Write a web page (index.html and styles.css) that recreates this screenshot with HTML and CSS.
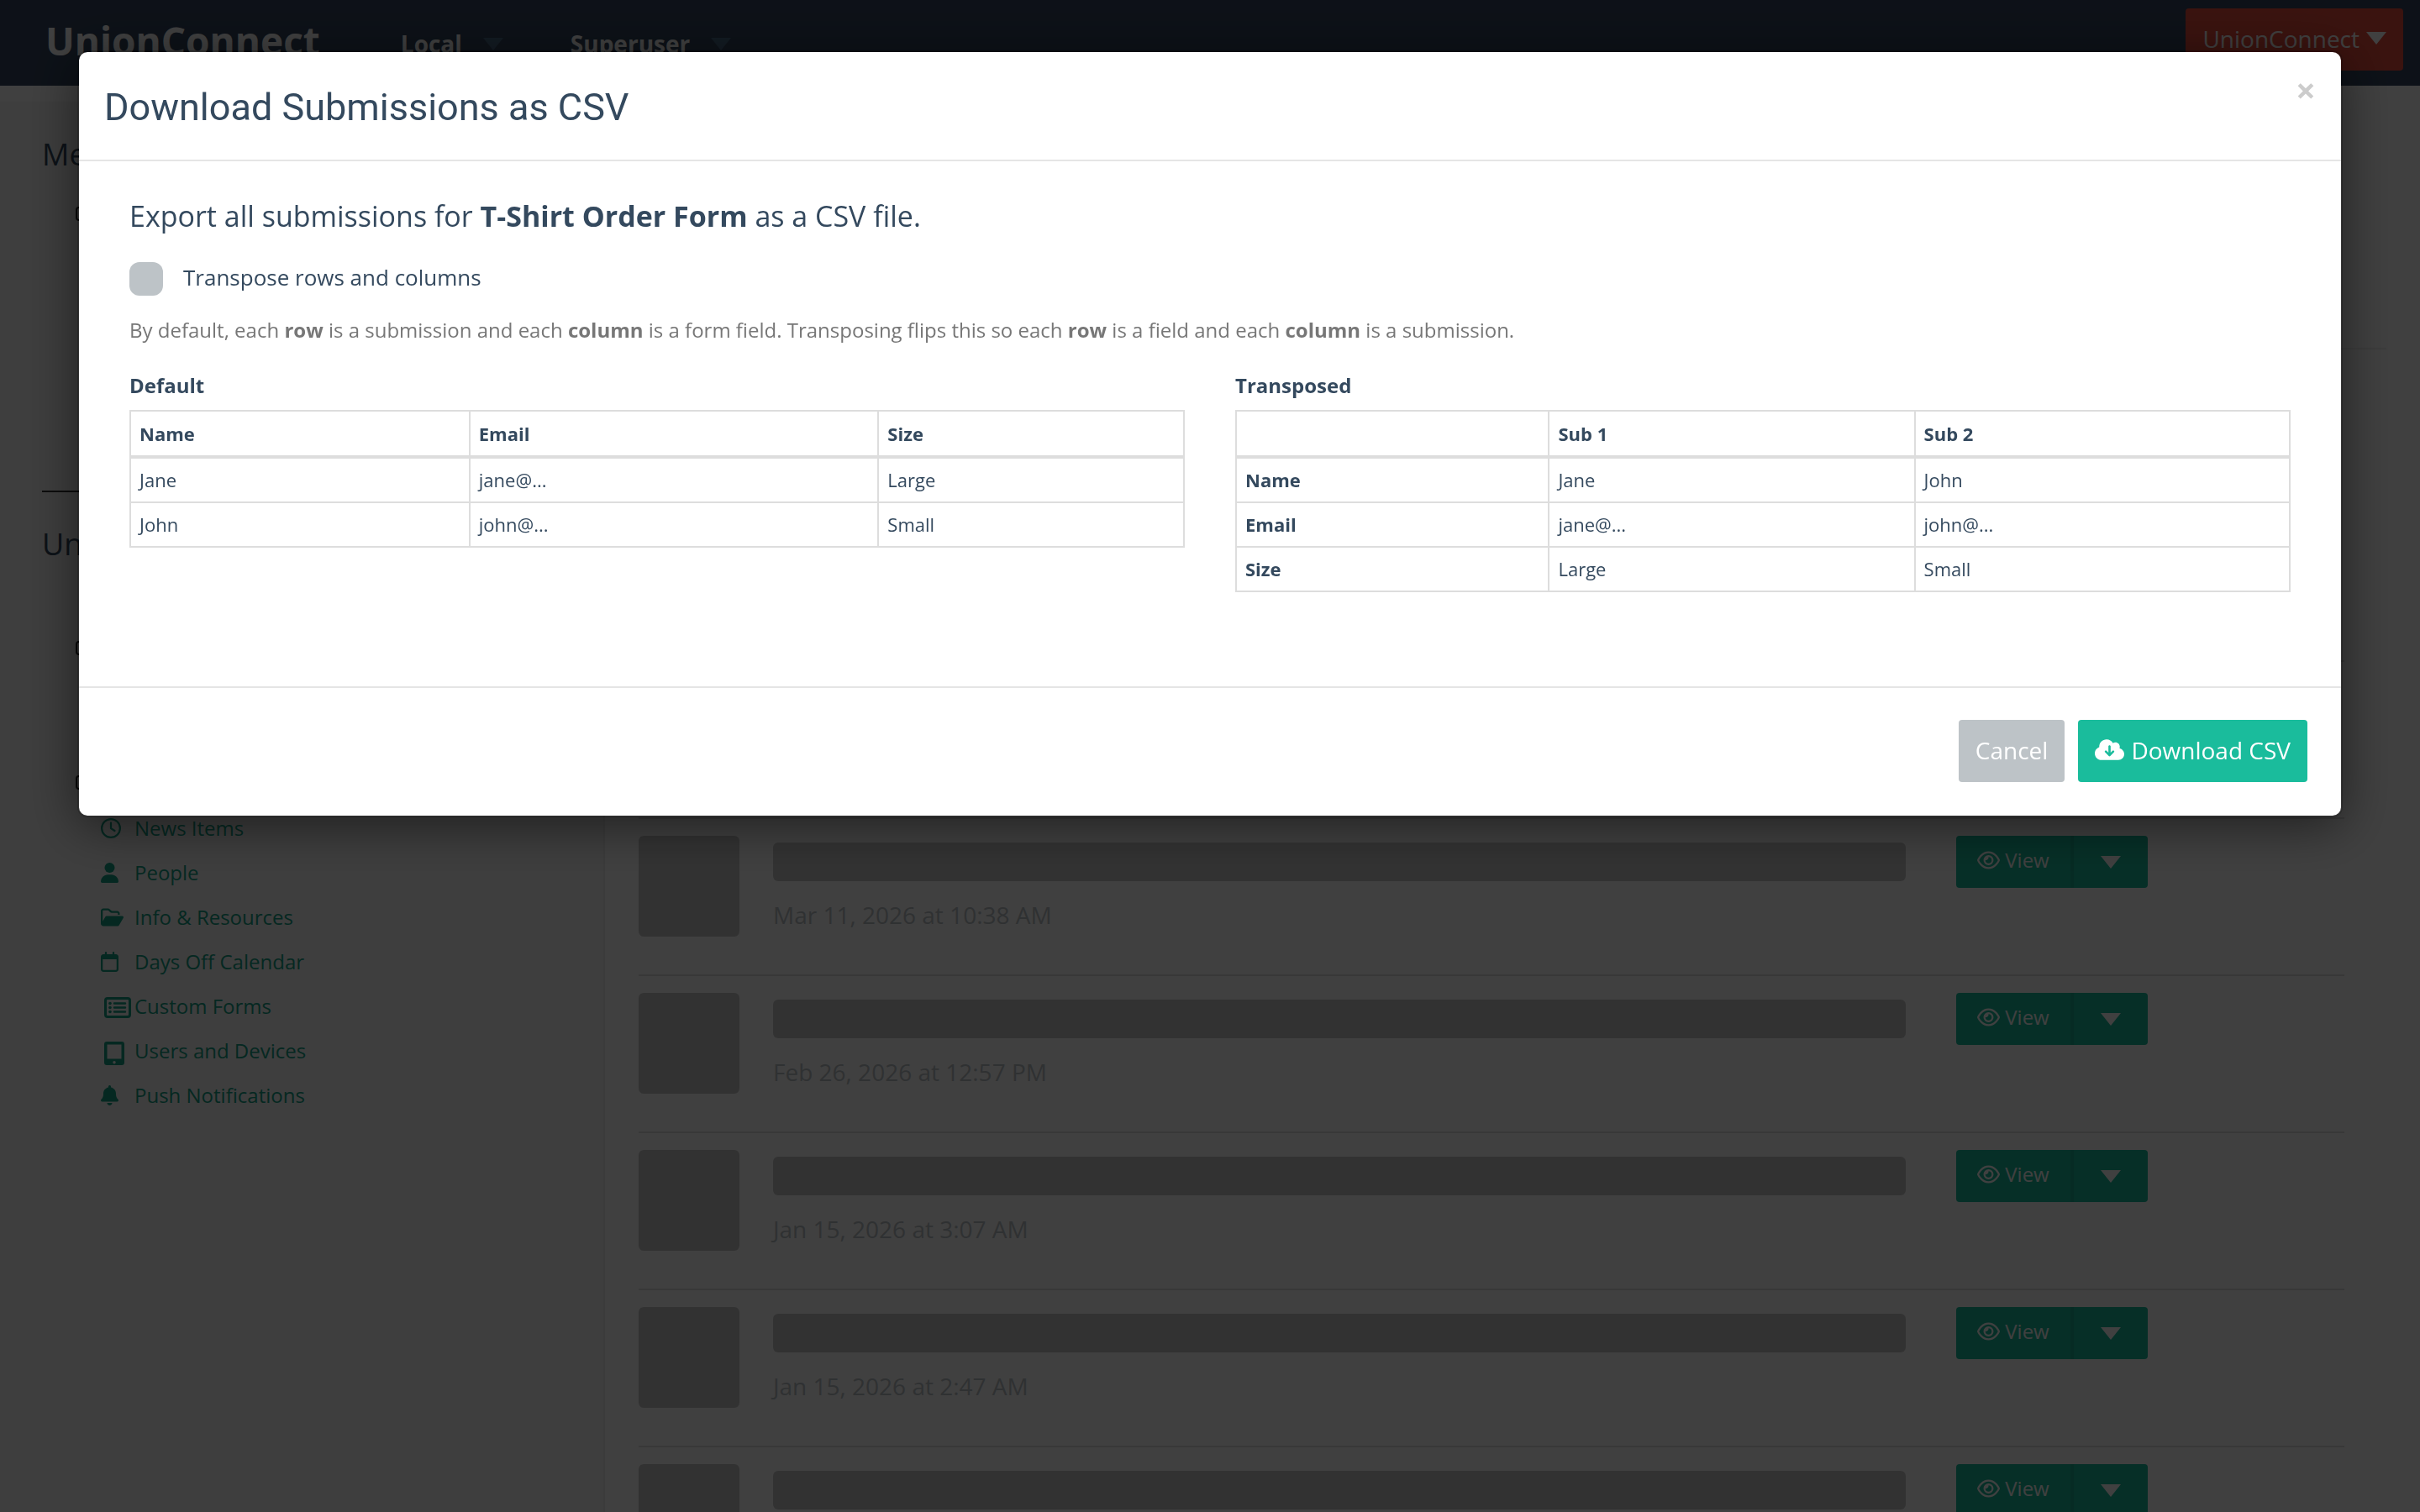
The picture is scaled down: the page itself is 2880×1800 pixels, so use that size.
FILE: index.html
```html
<!DOCTYPE html>
<html lang="en">
<head>
    <meta charset="UTF-8">
    <meta name="viewport" content="width=device-width, initial-scale=1.0">
    <title>UnionConnect</title>
    <link rel="stylesheet" href="styles.css">
</head>
<body>
<svg class="sprite" aria-hidden="true">
    <symbol id="i-clock" viewBox="0 0 512 512"><path d="M464 256A208 208 0 1 1 48 256a208 208 0 1 1 416 0zM0 256a256 256 0 1 0 512 0A256 256 0 1 0 0 256zM232 120V256c0 8 4 15.500 10.700 20l96 64c11 7.400 25.900 4.400 33.300-6.700s4.400-25.900-6.700-33.300L280 243.200V120c0-13.300-10.700-24-24-24s-24 10.700-24 24z"/></symbol>
    <symbol id="i-user" viewBox="0 0 448 512"><circle cx="224" cy="128" r="128"/><path d="M178.300 304h91.400C368.200 304 448 383.800 448 482.300c0 16.400-13.300 29.700-29.700 29.700H29.700C13.300 512 0 498.700 0 482.300C0 383.800 79.800 304 178.300 304z"/></symbol>
    <symbol id="i-folder" viewBox="0 0 576 512"><path d="M384 480h48c11.400 0 21.900-6 27.600-15.900l112-192c5.800-9.900 5.800-22.100 .1-32.100S555.500 224 544 224H144c-11.400 0-21.900 6-27.600 15.900L48 357.100V96c0-8.800 7.200-16 16-16H181.500c4.200 0 8.300 1.700 11.300 4.700l26.500 26.500c21 21 49.500 32.800 79.200 32.800H416c8.800 0 16 7.200 16 16v32h48V160c0-35.300-28.700-64-64-64H298.500c-17 0-33.300-6.700-45.300-18.700L226.700 50.700c-12-12-28.300-18.700-45.300-18.700H64C28.700 32 0 60.700 0 96V416c0 35.300 28.700 64 64 64H384z"/></symbol>
    <symbol id="i-calendar" viewBox="0 0 448 512"><path d="M152 24c0-13.300-10.700-24-24-24s-24 10.700-24 24V64H64C28.700 64 0 92.700 0 128V448c0 35.300 28.700 64 64 64H384c35.300 0 64-28.700 64-64V128c0-35.300-28.700-64-64-64H344V24c0-13.300-10.700-24-24-24s-24 10.700-24 24V64H152V24zM48 192H400V448c0 8.800-7.200 16-16 16H64c-8.800 0-16-7.200-16-16V192z"/></symbol>
    <symbol id="i-list" viewBox="0 0 32 26"><rect x="1.500" y="1.500" width="29" height="22" rx="2.500" fill="none" stroke="currentColor" stroke-width="3"/><path d="M12 7.500h13M12 12.500h13M12 17.500h13" fill="none" stroke="currentColor" stroke-width="2.400" stroke-linecap="round"/><circle cx="7" cy="7.500" r="1.800"/><circle cx="7" cy="12.500" r="1.800"/><circle cx="7" cy="17.500" r="1.800"/></symbol>
    <symbol id="i-tablet" viewBox="0 0 24 28"><path fill-rule="evenodd" d="M3 0h18a3 3 0 0 1 3 3v22a3 3 0 0 1-3 3H3a3 3 0 0 1-3-3V3a3 3 0 0 1 3-3zM3.500 3.500v17h17v-17zM12 23a1.700 1.700 0 1 0 .01 0z"/></symbol>
    <symbol id="i-bell" viewBox="0 0 448 512"><path d="M224 0c-17.700 0-32 14.300-32 32V51.200C119 66 64 130.600 64 208v18.800c0 47-17.300 92.400-48.500 127.600l-7.400 8.300c-8.400 9.400-10.400 22.900-5.300 34.400S19.400 416 32 416H416c12.600 0 24-7.400 29.200-18.900s3.100-25-5.300-34.400l-7.400-8.300C401.300 319.200 384 273.900 384 226.800V208c0-77.400-55-142-128-156.800V32c0-17.700-14.300-32-32-32zm45.300 493.300c12-12 18.700-28.300 18.700-45.300H160c0 17 6.700 33.300 18.700 45.300s28.300 18.700 45.300 18.700s33.300-6.700 45.300-18.700z"/></symbol>
    <symbol id="i-eye" viewBox="0 0 576 512"><path d="M288 80c-65.200 0-118.800 29.600-159.900 67.700C89.600 183.500 63 226 49.400 256c13.600 30 40.200 72.500 78.600 108.300C169.200 402.400 222.800 432 288 432s118.800-29.600 159.900-67.700C486.400 328.500 513 286 526.600 256c-13.600-30-40.200-72.500-78.600-108.300C406.800 109.600 353.200 80 288 80zM95.400 112.600C142.500 68.800 207.200 32 288 32s145.500 36.800 192.600 80.600c46.800 43.500 78.100 95.400 93 131.100c3.300 7.900 3.300 16.700 0 24.600c-14.900 35.700-46.200 87.700-93 131.100C433.500 443.200 368.800 480 288 480s-145.500-36.800-192.600-80.600C48.600 356 17.300 304 2.500 268.300c-3.300-7.900-3.300-16.700 0-24.600C17.300 208 48.600 156 95.400 112.600zM288 336c44.200 0 80-35.800 80-80s-35.800-80-80-80c-.7 0-1.300 0-2 0c1.300 5.100 2 10.500 2 16c0 35.300-28.700 64-64 64c-5.500 0-10.900-.7-16-2c0 .7 0 1.300 0 2c0 44.200 35.800 80 80 80zm0-208a128 128 0 1 1 0 256 128 128 0 1 1 0-256z"/></symbol>
    <symbol id="i-cloud" viewBox="0 32 640 448"><path d="M144 480C64.500 480 0 415.500 0 336c0-62.800 40.200-116.200 96.200-135.900c-.1-2.700-.2-5.400-.2-8.100c0-88.400 71.600-160 160-160c59.300 0 111 32.200 138.700 80.200C409.900 102 428.300 96 448 96c53 0 96 43 96 96c0 12.200-2.300 23.800-6.400 34.600C596 238.400 640 290.100 640 352c0 70.700-57.300 128-128 128H144zm79-167l80 80c9.400 9.400 24.600 9.400 33.900 0l80-80c9.400-9.400 9.400-24.600 0-33.900s-24.600-9.400-33.900 0l-39 39V184c0-13.300-10.700-24-24-24s-24 10.700-24 24V318.100l-39-39c-9.400-9.400-24.600-9.400-33.900 0s-9.400 24.600 0 33.900z"/></symbol>
</svg>

<header class="navbar">
    <a class="brand" href="#">UnionConnect</a>
    <nav class="nav-menu">
        <a href="#">Local <span class="caret"></span></a>
        <a href="#">Superuser <span class="caret"></span></a>
    </nav>
    <button type="button" class="btn btn-danger account">UnionConnect <span class="caret"></span></button>
</header>

<div class="page">
    <aside class="sidebar">
        <section class="side-top">
            <h2>Menu</h2>
            <span class="box"></span>
        </section>
        <section class="side-union">
            <h2>Union</h2>
            <div class="menu-group"><span class="box"></span></div>
            <div class="menu-group open">
                <span class="box"></span>
                <ul class="side-links">
                    <li><a href="#"><svg class="ico w24"><use href="#i-clock"/></svg>News Items</a></li>
                    <li><a href="#"><svg class="ico w21"><use href="#i-user"/></svg>People</a></li>
                    <li><a href="#"><svg class="ico w27"><use href="#i-folder"/></svg>Info &amp; Resources</a></li>
                    <li><a href="#"><svg class="ico w21"><use href="#i-calendar"/></svg>Days Off Calendar</a></li>
                    <li><a href="#"><svg class="ico list"><use href="#i-list"/></svg>Custom Forms</a></li>
                    <li><a href="#"><svg class="ico tablet"><use href="#i-tablet"/></svg>Users and Devices</a></li>
                    <li><a href="#"><svg class="ico w21"><use href="#i-bell"/></svg>Push Notifications</a></li>
                </ul>
            </div>
        </section>
    </aside>

    <main class="content">
        <div class="content-head"></div>
        <ul class="submissions">
            <li class="submission blank"></li>
            <li class="submission">
                <div class="thumb"></div>
                <div class="info"><div class="bar"></div><p>Mar 11, 2026 at 10:38 AM</p></div>
                <div class="split">
                    <button type="button" class="view"><svg class="eye"><use href="#i-eye"/></svg>View</button>
                    <button type="button" class="more" aria-label="More"><span class="caret"></span></button>
                </div>
            </li>
            <li class="submission">
                <div class="thumb"></div>
                <div class="info"><div class="bar"></div><p>Feb 26, 2026 at 12:57 PM</p></div>
                <div class="split">
                    <button type="button" class="view"><svg class="eye"><use href="#i-eye"/></svg>View</button>
                    <button type="button" class="more" aria-label="More"><span class="caret"></span></button>
                </div>
            </li>
            <li class="submission">
                <div class="thumb"></div>
                <div class="info"><div class="bar"></div><p>Jan 15, 2026 at 3:07 AM</p></div>
                <div class="split">
                    <button type="button" class="view"><svg class="eye"><use href="#i-eye"/></svg>View</button>
                    <button type="button" class="more" aria-label="More"><span class="caret"></span></button>
                </div>
            </li>
            <li class="submission">
                <div class="thumb"></div>
                <div class="info"><div class="bar"></div><p>Jan 15, 2026 at 2:47 AM</p></div>
                <div class="split">
                    <button type="button" class="view"><svg class="eye"><use href="#i-eye"/></svg>View</button>
                    <button type="button" class="more" aria-label="More"><span class="caret"></span></button>
                </div>
            </li>
            <li class="submission">
                <div class="thumb"></div>
                <div class="info"><div class="bar"></div></div>
                <div class="split">
                    <button type="button" class="view"><svg class="eye"><use href="#i-eye"/></svg>View</button>
                    <button type="button" class="more" aria-label="More"><span class="caret"></span></button>
                </div>
            </li>
        </ul>
    </main>
</div>

<div class="backdrop">
    <div class="modal" role="dialog" aria-labelledby="modalTitle">
        <div class="modal-header">
            <h1 id="modalTitle">Download Submissions as CSV</h1>
            <button type="button" class="close" aria-label="Close">&times;</button>
        </div>
        <div class="modal-body">
            <p class="lead">Export all submissions for <strong>T-Shirt Order Form</strong> as a CSV file.</p>
            <div class="check-row">
                <input type="checkbox" id="transpose" name="transpose">
                <label for="transpose">Transpose rows and columns</label>
            </div>
            <p class="help">By default, each <strong>row</strong> is a submission and each <strong>column</strong> is a form field. Transposing flips this so each <strong>row</strong> is a field and each <strong>column</strong> is a submission.</p>
            <div class="previews">
                <table class="default">
                    <caption>Default</caption>
                    <thead>
                    <tr><th>Name</th><th>Email</th><th>Size</th></tr>
                    </thead>
                    <tbody>
                    <tr><td>Jane</td><td>jane@...</td><td>Large</td></tr>
                    <tr><td>John</td><td>john@...</td><td>Small</td></tr>
                    </tbody>
                </table>
                <table class="transposed">
                    <caption>Transposed</caption>
                    <thead>
                    <tr><th></th><th>Sub 1</th><th>Sub 2</th></tr>
                    </thead>
                    <tbody>
                    <tr><th>Name</th><td>Jane</td><td>John</td></tr>
                    <tr><th>Email</th><td>jane@...</td><td>john@...</td></tr>
                    <tr><th>Size</th><td>Large</td><td>Small</td></tr>
                    </tbody>
                </table>
            </div>
        </div>
        <div class="modal-footer">
            <button type="button" class="btn btn-default">Cancel</button>
            <button type="button" class="btn btn-primary"><svg class="cloud"><use href="#i-cloud"/></svg>Download CSV</button>
        </div>
    </div>
</div>
</body>
</html>
```
FILE: styles.css
```css
* {
    box-sizing: border-box;
}
body {
    margin: 0;
    height: 100vh;
    overflow: hidden;
    display: flex;
    flex-direction: column;
    font-family: "Open Sans", sans-serif;
    font-size: 28px;
    color: #34495e;
    background-color: #fff;
}
h1, h2, p, ul {
    margin: 0;
    padding: 0;
    font-weight: 400;
}
ul {
    list-style: none;
}
a {
    text-decoration: none;
}
button {
    border: none;
    font-family: inherit;
    cursor: pointer;
}
svg {
    fill: currentColor;
}
.sprite {
    display: none;
}
.caret {
    display: inline-block;
    border: 12px solid transparent;
    border-top: 15px solid currentColor;
    border-bottom: none;
}
.btn {
    display: flex;
    align-items: center;
    height: 74px;
    padding: 0 20px 3px;
    border-radius: 4px;
    font-size: 28px;
    color: #fff;
}
.btn-danger {
    background-color: #e74c3c;
}
.btn-default {
    background-color: #bdc3c7;
}
.btn-primary {
    background-color: #1abc9c;
}

/* Navbar */
.navbar {
    display: flex;
    flex: none;
    align-items: flex-start;
    height: 102px;
    padding: 10px 20px 0 54px;
    background-color: #34465f;
}
.brand {
    line-height: 76px;
    font-size: 46px;
    font-weight: 700;
    color: #fff;
}
.nav-menu {
    display: flex;
    gap: 80px;
    margin-left: 96px;
    line-height: 84px;
    font-size: 28px;
    font-weight: 700;
}
.nav-menu a {
    display: flex;
    align-items: center;
    gap: 25px;
    color: #fff;
}
.nav-menu .caret {
    color: #4b6a88;
}
.account {
    gap: 8px;
    margin-left: auto;
}

/* Sidebar */
.page {
    display: flex;
    flex: 1;
    min-height: 0;
}
.sidebar {
    width: 25%;
    margin-top: 19px;
    padding: 43px 50px 0;
    border-right: 2px solid #ebebeb;
    background-color: #f5f5f5;
}
.sidebar h2 {
    line-height: 40px;
    font-size: 36px;
}
.box {
    display: block;
    width: 20px;
    height: 17px;
    margin-left: 40px;
    border: 2px solid #222;
    border-radius: 4px;
}
.side-top {
    min-height: 422px;
    border-bottom: 2px solid #333;
}
.side-top .box {
    margin-top: 42px;
}
.side-union {
    padding-top: 42px;
}
.side-union h2 {
    margin-bottom: 95px;
}
.menu-group {
    min-height: 160px;
}
.side-links {
    margin-top: 19px;
    padding-left: 70px;
}
.side-links a {
    display: flex;
    align-items: center;
    line-height: 53px;
    font-size: 24px;
    color: #16a085;
}
.ico {
    height: 24px;
}
.w21 {
    width: 21px;
    margin-right: 19px;
}
.w24 {
    width: 24px;
    margin-right: 16px;
}
.w27 {
    width: 27px;
    margin-right: 13px;
}
.list {
    width: 32px;
    height: 26px;
    margin: 4px 4px 0;
}
.tablet {
    width: 24px;
    height: 28px;
    margin: 6px 12px 0 4px;
}

/* Submissions */
.content {
    flex: 1;
    padding: 0 40px;
}
.content-head {
    height: 314px;
    margin-bottom: 370px;
    border-bottom: 2px solid #eee;
}
.submissions {
    margin-right: 50px;
}
.submission {
    display: flex;
    gap: 40px;
    height: 187px;
    padding-top: 20px;
    border-top: 2px solid #ddd;
}
.thumb {
    width: 120px;
    height: 120px;
    border-radius: 6px;
    background-color: #c8c8c8;
}
.info {
    flex: 1;
    margin-right: 20px;
    padding-top: 8px;
}
.bar {
    height: 46px;
    border-radius: 6px;
    background-color: #c8c8c8;
}
.info p {
    margin-top: 18px;
    line-height: 44px;
    color: #bdc3c7;
}
.split {
    display: flex;
    align-items: flex-start;
    width: 462px;
}
.split button {
    display: flex;
    align-items: center;
    justify-content: center;
    height: 62px;
    background-color: #1abc9c;
    font-size: 24px;
    color: #fff;
}
.split .view {
    gap: 6px;
    width: 136px;
    padding-bottom: 6px;
    border-radius: 4px 0 0 4px;
}
.split .more {
    width: 92px;
    border-left: 4px solid #18ab8e;
    border-radius: 0 4px 4px 0;
}
.eye {
    width: 27px;
    height: 24px;
}

/* Modal */
.backdrop {
    position: fixed;
    inset: 0;
    padding: 60px 92px;
    background-color: rgba(0, 0, 0, 0.75);
}
.modal {
    border: 2px solid rgba(0, 0, 0, 0.2);
    border-radius: 12px;
    background-color: #fff;
    background-clip: padding-box;
    box-shadow: 0 10px 60px rgba(0, 0, 0, 0.5);
}
.modal-header {
    display: flex;
    justify-content: space-between;
    align-items: flex-start;
    padding: 32px 30px 28px;
    border-bottom: 2px solid #e5e5e5;
}
.modal-header h1 {
    font-family: Roboto, sans-serif;
    line-height: 68px;
    font-size: 45px;
}
.close {
    padding: 0;
    background: none;
    line-height: 26px;
    font-size: 42px;
    font-weight: 700;
    color: #ccc;
}
.modal-body {
    padding: 44px 60px 112px;
}
.lead {
    line-height: 42px;
    font-size: 34px;
}
.check-row {
    display: flex;
    align-items: center;
    gap: 24px;
    margin: 34px 0 24px;
}
.check-row input {
    appearance: none;
    width: 40px;
    height: 40px;
    margin: 0;
    border-radius: 12px;
    background-color: #bdc3c7;
}
.check-row label {
    line-height: 36px;
    padding-bottom: 4px;
    font-size: 26px;
}
.help {
    line-height: 34px;
    font-size: 24px;
    color: #777;
}
.previews {
    display: flex;
    align-items: flex-start;
    gap: 60px;
    margin-top: 32px;
}
table {
    flex: 1;
    width: 100%;
    table-layout: fixed;
    border-collapse: collapse;
    line-height: 31px;
    font-size: 22px;
    text-align: left;
}
caption {
    padding-bottom: 12px;
    line-height: 34px;
    font-size: 24px;
    font-weight: 700;
    text-align: left;
}
th, td {
    padding: 10px;
    border: 2px solid #ddd;
}
thead th {
    height: 55px;
    border-bottom-width: 4px;
    line-height: 32px;
}
.default th:nth-child(1) {
    width: 32.2%;
}
.default th:nth-child(2) {
    width: 38.8%;
}
.transposed th:nth-child(1) {
    width: 29.7%;
}
.transposed th:nth-child(2) {
    width: 34.7%;
}
.modal-footer {
    display: flex;
    justify-content: flex-end;
    gap: 16px;
    padding: 38px 40px 40px;
    border-top: 2px solid #e5e5e5;
}
.cloud {
    width: 35px;
    height: 25px;
    margin-right: 8px;
}
```
